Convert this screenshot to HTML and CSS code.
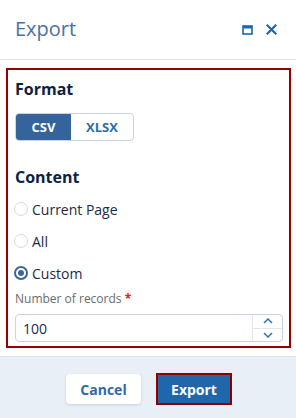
FILE: index.html
```html
<!DOCTYPE html>
<html lang="en">
<head>
  <meta charset="UTF-8">
  <title>Export</title>
  <link rel="stylesheet" href="styles.css">
</head>
<body>

  <div class="dialog">
    <div class="cabecalho">
      <span class="titulo">Export</span>
      <div class="acoes">
        <svg width="11" height="10" viewBox="0 0 11 10">
          <rect x="1" y="1" width="9" height="8" fill="none" stroke="#1f66ad" stroke-width="1.6"/>
          <rect x="1" y="1" width="9" height="2.5" fill="#1f66ad"/>
        </svg>
        <svg width="11" height="11" viewBox="0 0 11 11">
          <path d="M1.5 1.5 L9.5 9.5 M9.5 1.5 L1.5 9.5" stroke="#1f66ad" stroke-width="2.2" stroke-linecap="square"/>
        </svg>
      </div>
    </div>

    <div class="corpo">
      <div class="caixa">
        <h3 class="secao">Format</h3>
        <div class="alternar">
          <span class="opcao ativa">CSV</span>
          <span class="opcao">XLSX</span>
        </div>

        <h3 class="secao secao-conteudo">Content</h3>
        <label class="radio"><span class="bolinha"></span>Current Page</label>
        <label class="radio"><span class="bolinha"></span>All</label>
        <label class="radio"><span class="bolinha marcada"></span>Custom</label>

        <div class="rotulo">Number of records <span class="obrigatorio">*</span></div>
        <div class="campo">
          <span class="valor">100</span>
          <div class="setas">
            <span class="seta">
              <svg width="10" height="6" viewBox="0 0 10 6"><path d="M1 5 L5 1 L9 5" fill="none" stroke="#2d72b8" stroke-width="1.5"/></svg>
            </span>
            <span class="seta">
              <svg width="10" height="6" viewBox="0 0 10 6"><path d="M1 1 L5 5 L9 1" fill="none" stroke="#2d72b8" stroke-width="1.5"/></svg>
            </span>
          </div>
        </div>
      </div>
    </div>

    <div class="rodape">
      <button class="botao cancelar">Cancel</button>
      <button class="botao exportar">Export</button>
    </div>
  </div>

</body>
</html>
```

FILE: styles.css
```css
body {
  margin: 0;
  background-color: #fff;
  font-family: 'Open Sans', 'Noto Sans', sans-serif;
  color: #1b2b45;
}

.dialog {
  width: 296px;
  height: 418px;
  display: flex;
  flex-direction: column;
  overflow: hidden;
}

.cabecalho {
  height: 59px;
  border-bottom: 1px solid #e2e6ea;
  display: flex;
  align-items: center;
  justify-content: space-between;
  padding: 0 19px 0 15px;
  flex-shrink: 0;
}

.titulo {
  font-size: 20px;
  color: #4a70a5;
  margin-top: -2px;
}

.acoes {
  display: flex;
  align-items: center;
  gap: 13px;
}

.corpo {
  padding: 8px 5px 0 6px;
}

.caixa {
  border: 2px solid #950000;
  padding: 8px 6px 4px 7px;
}

.secao {
  margin: 0;
  font-size: 16px;
  line-height: 22px;
  font-weight: 700;
  color: #0f2142;
}

.secao-conteudo {
  margin-top: 25px;
  margin-bottom: 5px;
}

.alternar {
  display: inline-flex;
  margin-top: 13px;
  height: 28px;
  border: 1px solid #c9d5e3;
  border-radius: 4px;
  overflow: hidden;
  box-sizing: border-box;
}

.opcao {
  display: flex;
  align-items: center;
  justify-content: center;
  font-size: 13px;
  font-weight: 700;
  color: #2a6db0;
  width: 62px;
}

.opcao.ativa {
  width: 55px;
  background-color: #35649c;
  color: #fff;
}

.radio {
  display: flex;
  align-items: center;
  height: 32px;
  font-size: 14px;
  color: #1b2b45;
}

.bolinha {
  width: 12px;
  height: 12px;
  border: 1px solid #d3dbe5;
  border-radius: 50%;
  margin-right: 4px;
  margin-left: -1px;
  box-sizing: content-box;
  position: relative;
}

.bolinha.marcada {
  border: 2px solid #3a659c;
  width: 10px;
  height: 10px;
}

.bolinha.marcada::after {
  content: '';
  position: absolute;
  left: 2px;
  top: 2px;
  width: 6px;
  height: 6px;
  border-radius: 50%;
  background-color: #3a659c;
}

.rotulo {
  font-size: 12px;
  line-height: 16px;
  color: #6b6b6b;
  margin-top: 2px;
}

.obrigatorio {
  color: #e0202a;
  font-weight: 700;
}

.campo {
  margin-top: 7px;
  height: 28px;
  border: 1px solid #c9d5e3;
  border-radius: 4px;
  display: flex;
  box-sizing: border-box;
}

.valor {
  flex: 1;
  display: flex;
  align-items: center;
  padding-left: 7px;
  font-size: 14px;
  color: #1b2b45;
}

.setas {
  width: 29px;
  border-left: 1px solid #e3e8ee;
  display: flex;
  flex-direction: column;
}

.seta {
  flex: 1;
  display: flex;
  align-items: center;
  justify-content: center;
}

.seta + .seta {
  border-top: 1px solid #e3e8ee;
}

.rodape {
  margin-top: 8px;
  flex: 1;
  background-color: #e9eff7;
  border-top: 1px solid #dbe3ed;
  display: flex;
  justify-content: center;
  align-items: flex-start;
  gap: 15px;
  padding: 16px 0 0 2px;
}

.botao {
  font-family: 'Open Sans', 'Noto Sans', sans-serif;
  font-size: 14px;
  font-weight: 700;
  border: none;
  border-radius: 4px;
  cursor: pointer;
}

.cancelar {
  margin-top: 1px;
  width: 75px;
  height: 30px;
  background-color: #fff;
  color: #2f6aa6;
  box-shadow: 0 1px 3px rgba(40, 70, 110, 0.18);
}

.exportar {
  width: 76px;
  height: 32px;
  background-color: #1f66ab;
  color: #fff;
  border: 2px solid #8e0000;
  border-radius: 0;
}
```
